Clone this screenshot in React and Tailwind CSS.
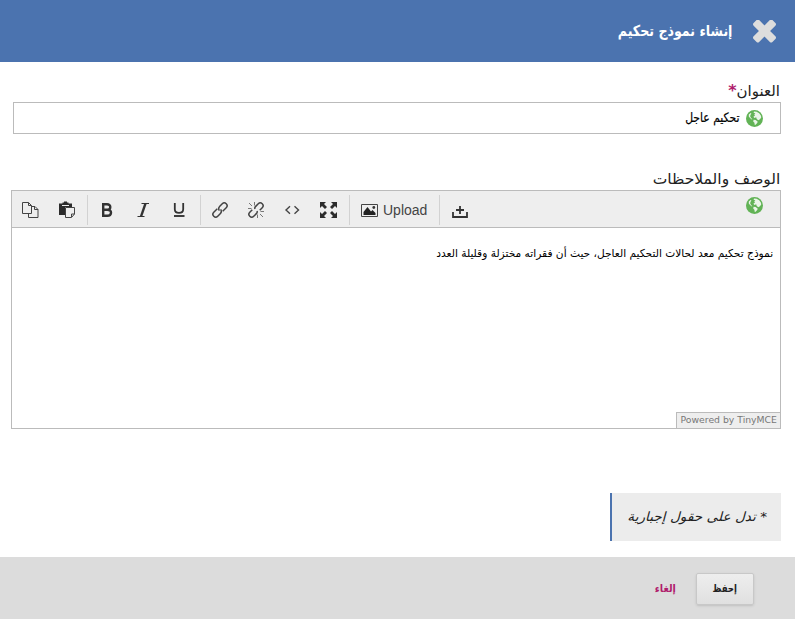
function Globe() {
  return (
    <svg className="shrink-0" width="17" height="17" viewBox="0 0 17 17">
      <circle cx="8.5" cy="8.5" r="8.5" fill="#62b356" />
      <path d="M8 1.5L10.6 1.8L13.2 3.2L15 5.8L15.2 7.8L13.6 9.4L12.2 10.2L10.6 8.8L10.2 7.2L8.4 8L7.4 6.8L9 5.4L8.2 4.6L9.4 3.4L7.6 2.8Z" fill="#eaf5e8" />
      <path d="M2.8 4.6L4.6 3L5.4 3.6L4.4 5L4.2 6.6L5.2 8.2L6.4 9L5.8 9.4L4 8L2.8 6.4Z" fill="#eaf5e8" />
      <path d="M7.6 9.8L9.6 10L11.6 11.4L11.4 12.8L9.6 14.8L8.8 15L8.4 12.8L7.2 11.4Z" fill="#eaf5e8" />
    </svg>
  );
}

function Tool({ children }) {
  return (
    <button className="flex h-8 w-9 items-center justify-center">
      <svg width="18" height="18" viewBox="0 0 18 18" fill="none" stroke="#333" strokeWidth="1.3">
        {children}
      </svg>
    </button>
  );
}

function Divider() {
  return <div className="h-[30px] w-px bg-[#d2d2d2]" />;
}

function Toolbar() {
  return (
    <div dir="ltr" className="flex h-[37px] items-center border-b border-[#bbb] bg-[#eee] pt-px pr-[17px]">
      <div className="flex w-[75px]">
        <Tool>
          <path d="M7 12.5H1.5V1.5H7.5L10.5 4.5V12.5H7M7.5 1.5V4.5H10.5M10.5 5.5H14L17 8.5V16.5H7.5V12.5M13.5 5.5V8.5H17" strokeWidth="1" stroke="#444" />
        </Tool>
        <Tool>
          <g transform="translate(1 0)">
            <path d="M1 2.5H4.5V1.5H6V.5H9V1.5H10.5V2.5H14V6H7V14H1Z" fill="#2b2b2b" stroke="none" />
            <path d="M4 4.5H11" stroke="#eee" strokeWidth="1" />
            <path d="M7.5 6.5H16.5V13L13.5 16.5H7.5ZM13.5 16V13H16.5" strokeWidth="1" stroke="#444" fill="#eee" />
          </g>
        </Tool>
      </div>
      <Divider />
      <div className="flex w-28 pl-px">
        <Tool>
          <path d="M5 3.2H9C13.6 3.2 13 8.7 9.5 8.7H5M9.3 8.7C14.5 8.7 14 14.8 9.3 14.8H5M5.2 2.1V15.9" strokeWidth="2.4" />
        </Tool>
        <Tool>
          <path d="M7.5 2.5H15M3.5 15.5H10.5" strokeWidth="1.2" />
          <path d="M11.5 2.5L7 15.5" strokeWidth="2.3" />
        </Tool>
        <Tool>
          <path d="M4.8 2V8.2C4.8 13 13.2 13 13.2 8.2V2" strokeWidth="1.8" />
          <path d="M4 15H14.5" strokeWidth="1.9" />
        </Tool>
      </div>
      <Divider />
      <div className="flex w-[148px] pl-px">
        <Tool>
          <g transform="rotate(-45 9 9)" strokeWidth="1.5" stroke="#444">
            <path d="M8 6.2H3A2.8 2.8 0 0 0 3 11.8H6.5C8.5 11.8 9.5 11 9.9 9M10 11.8H15A2.8 2.8 0 0 0 15 6.2H11.5C9.5 6.2 8.5 7 8.1 9" />
          </g>
        </Tool>
        <Tool>
          <g transform="rotate(-45 9 9)" strokeWidth="1.5" stroke="#444">
            <path d="M6.5 6.2H3A2.8 2.8 0 0 0 3 11.8H7Q8.3 11.8 9 10.5M11.5 11.8H15A2.8 2.8 0 0 0 15 6.2H11Q9.7 6.2 9 7.5" />
          </g>
          <path d="M2 2L5 5M7.5 1V4.5M1 7.5H4.5M16 16L13 13M10.5 17V13.5M17 10.5H13.5" strokeWidth="1" stroke="#777" />
        </Tool>
        <Tool>
          <path d="M7 5.3L3 9L7 12.7M11.5 5.3L15.5 9L11.5 12.7" strokeWidth="1.4" stroke="#444" />
        </Tool>
        <Tool>
          <path d="M1 1H7L5 3L8 6L6 8L3 5L1 7ZM18 1V7L16 5L13 8L11 6L14 3L12 1ZM1 17V11L3 13L6 10L8 12L5 15L7 17ZM18 17H12L14 15L11 12L13 10L16 13L18 11Z" fill="#2b2b2b" stroke="none" />
        </Tool>
      </div>
      <Divider />
      <button className="flex h-8 w-[89px] items-center gap-[5px] pl-[11px] font-['Liberation_Sans',sans-serif] text-sm text-[#444]">
        <svg className="shrink-0" width="17" height="14" viewBox="0 0 17 14">
          <path d="M.5 1.5H16.5V13.5H.5Z" fill="none" stroke="#444" />
          <path d="M2.5 12V9L6.5 4L10 8.5L11.5 7L14.5 10V12Z" fill="#222" />
          <circle cx="12.8" cy="4.5" r="1.4" fill="#333" />
        </svg>
        Upload
      </button>
      <Divider />
      <div className="flex grow pl-0.5">
        <Tool>
          <path d="M2 11V16H16V11M9 5V13M5 9H13" strokeWidth="1.8" />
        </Tool>
      </div>
      <div className="pb-2">
        <Globe />
      </div>
    </div>
  );
}

export default function App() {
  return (
    <div dir="rtl" className="flex h-[619px] w-[795px] flex-col bg-white font-['DejaVu_Sans',sans-serif] text-[#222]">
      <header className="flex h-[62px] shrink-0 items-center bg-[#4b73af] pr-[19px] text-white">
        <svg width="23" height="23" viewBox="0 0 23 23" fill="#ddd">
          <g transform="translate(11.5 11)">
            <rect x="-13.3" y="-3.9" width="26.6" height="7.8" rx="1.8" transform="rotate(45)" />
            <rect x="-13.3" y="-3.9" width="26.6" height="7.8" rx="1.8" transform="rotate(-45)" />
          </g>
        </svg>
        <h1 className="mr-[21px] origin-right scale-x-[0.84] whitespace-nowrap text-[15px] font-bold">إنشاء نموذج تحكيم</h1>
      </header>
      <main className="flex grow flex-col pl-[11px] pr-3.5">
        <label className="mt-[18px] flex h-[22px] items-center pr-px text-[15px]">
          <span>العنوان</span>
          <span className="text-base font-bold text-[#b01c6c]">*</span>
        </label>
        <div className="ml-0.5 flex h-8 items-center gap-[7px] border border-[#bbb] pr-[17px] text-[13px] text-black">
          <Globe />
          <span className="origin-right scale-x-[0.83] [-webkit-text-stroke:0.2px_black]">تحكيم عاجل</span>
        </div>
        <label className="mt-[34px] flex h-[22px] items-center pr-px text-[15px]">
          <span className="origin-right scale-x-[1.035]">الوصف والملاحظات</span>
        </label>
        <section className="flex h-[239px] flex-col border border-[#bbb]">
          <Toolbar />
          <div className="grow pr-[7px] pt-4 text-[11px] leading-5 text-black">
            <span className="inline-block origin-right scale-x-[0.965]">نموذج تحكيم معد لحالات التحكيم العاجل، حيث أن فقراته مختزلة وقليلة العدد</span>
          </div>
          <div className="flex h-4 w-[104px] items-center justify-center self-start border-l border-t border-[#bbb] bg-[#eee] text-[9px] text-[#777]">
            <span className="scale-x-[1.03] whitespace-nowrap">Powered by TinyMCE</span>
          </div>
        </section>
        <p className="mt-16 flex h-12 w-[171px] items-center border-l-2 border-[#4b73af] bg-[#ececec] pr-3.5 text-[13px] italic">
          <span className="origin-right scale-x-[1.05] whitespace-nowrap">* تدل على حقول إجبارية</span>
        </p>
      </main>
      <footer className="flex h-[62px] shrink-0 items-center bg-[#dcdcdc] pt-0.5 pr-[41px] text-[11px] font-bold">
        <button className="flex h-8 w-[58px] items-center justify-center rounded-xs border border-[#c8c8c8] bg-linear-to-b from-[#eee] to-[#e0e0e0] shadow-sm">
          <span className="scale-x-[0.78]">إحفظ</span>
        </button>
        <button className="mr-5 origin-right scale-x-[0.88] text-[#b01c6c]">إلغاء</button>
      </footer>
    </div>
  );
}
